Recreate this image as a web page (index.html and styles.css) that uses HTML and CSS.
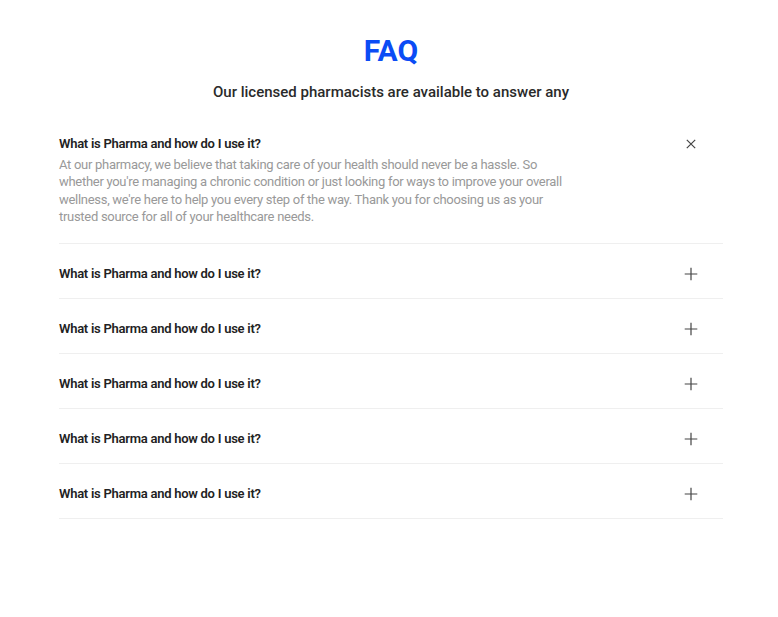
FILE: index.html
```html
<!DOCTYPE html>
<html lang="en">
<head>
<meta charset="utf-8">
<title>FAQ</title>
<link rel="stylesheet" href="styles.css">
</head>
<body>
<main class="faq">
  <h1 class="faq-title">FAQ</h1>
  <p class="faq-subtitle">Our licensed pharmacists are available to answer any</p>
  <div class="faq-list">
    <div class="faq-item open">
      <div class="faq-head">
        <span class="faq-q">What is Pharma and how do I use it?</span>
        <svg class="faq-icon" viewBox="0 0 14 14" width="14" height="14"><path d="M2.8 2.8L11.2 11.2M11.2 2.8L2.8 11.2" stroke="#444" stroke-width="1.2" fill="none"/></svg>
      </div>
      <p class="faq-a">At our pharmacy, we believe that taking care of your health should never be a hassle. So whether you're managing a chronic condition or just looking for ways to improve your overall wellness, we're here to help you every step of the way. Thank you for choosing us as your trusted source for all of your healthcare needs.</p>
    </div>
    <div class="faq-item">
      <div class="faq-head">
        <span class="faq-q">What is Pharma and how do I use it?</span>
        <svg class="faq-icon" viewBox="0 0 14 14" width="14" height="14"><path d="M7 0.7V13.3M0.7 7H13.3" stroke="#444" stroke-width="1.2" fill="none"/></svg>
      </div>
    </div>
    <div class="faq-item">
      <div class="faq-head">
        <span class="faq-q">What is Pharma and how do I use it?</span>
        <svg class="faq-icon" viewBox="0 0 14 14" width="14" height="14"><path d="M7 0.7V13.3M0.7 7H13.3" stroke="#444" stroke-width="1.2" fill="none"/></svg>
      </div>
    </div>
    <div class="faq-item">
      <div class="faq-head">
        <span class="faq-q">What is Pharma and how do I use it?</span>
        <svg class="faq-icon" viewBox="0 0 14 14" width="14" height="14"><path d="M7 0.7V13.3M0.7 7H13.3" stroke="#444" stroke-width="1.2" fill="none"/></svg>
      </div>
    </div>
    <div class="faq-item">
      <div class="faq-head">
        <span class="faq-q">What is Pharma and how do I use it?</span>
        <svg class="faq-icon" viewBox="0 0 14 14" width="14" height="14"><path d="M7 0.7V13.3M0.7 7H13.3" stroke="#444" stroke-width="1.2" fill="none"/></svg>
      </div>
    </div>
    <div class="faq-item">
      <div class="faq-head">
        <span class="faq-q">What is Pharma and how do I use it?</span>
        <svg class="faq-icon" viewBox="0 0 14 14" width="14" height="14"><path d="M7 0.7V13.3M0.7 7H13.3" stroke="#444" stroke-width="1.2" fill="none"/></svg>
      </div>
    </div>
  </div>
</main>
</body>
</html>
```
FILE: styles.css
```css
* { box-sizing: border-box; }
html, body { margin: 0; padding: 0; background: #fff; }
body { font-family: Roboto, "Liberation Sans", Arial, sans-serif; color: #222; padding-left: 4px; }

.faq {
  width: 664px;
  margin: 0 auto;
  padding-top: 33px;
  display: flex;
  flex-direction: column;
}
.faq-title {
  margin: 0;
  text-align: center;
  font-size: 30px;
  line-height: 36px;
  font-weight: 700;
  color: #0b4cf5;
}
.faq-subtitle {
  margin: 11px 0 0;
  text-align: center;
  font-size: 15px;
  line-height: 24px;
  font-weight: 500;
  color: #2a2a2a;
}
.faq-list {
  margin-top: 10px;
  display: flex;
  flex-direction: column;
}
.faq-item {
  padding: 20px 0 14px;
  border-bottom: 1px solid #efefef;
}
.faq-head {
  display: flex;
  align-items: center;
  justify-content: space-between;
  padding-right: 25px;
  height: 20px;
}
.faq-q {
  font-size: 13px;
  font-weight: 600;
  line-height: 20px;
  letter-spacing: -0.26px;
  color: #222;
}
.faq-icon { display: block; flex: none; }
.faq-a {
  margin: 2px 0 3px;
  max-width: 512px;
  font-size: 13px;
  line-height: 17.4px;
  letter-spacing: -0.29px;
  color: #999;
}
```
